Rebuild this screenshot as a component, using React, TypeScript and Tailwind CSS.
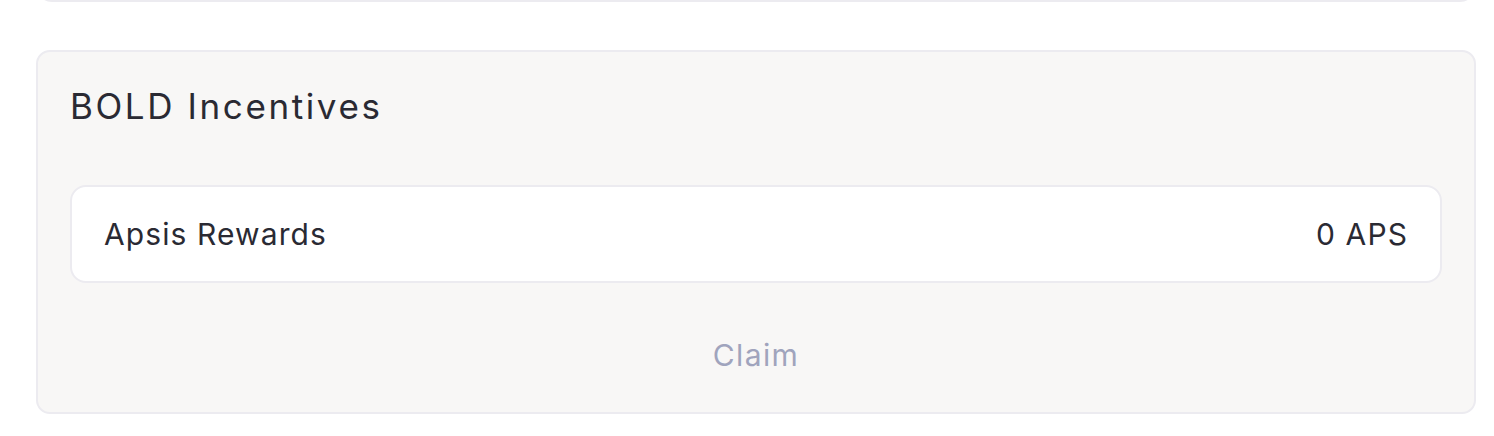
import React from "react";

export default function App() {
  return (
    <div
      className="h-[436px] w-full overflow-hidden bg-white pl-[36px] pr-[18px] text-[#2a2a33]"
      style={{ fontFamily: "Inter, 'Noto Sans', sans-serif" }}
    >
      <div className="-mt-[60px] h-[62px] rounded-[16px] border-2 border-[#ecebf0] bg-white" />
      <div className="mt-[48px] flex h-[364px] flex-col rounded-[14px] border-2 border-[#ecebf0] bg-[#f8f7f6] px-[32px]">
        <div className="pt-[32px] text-[35px] leading-[44px] font-normal tracking-[2.6px]">
          BOLD Incentives
        </div>
        <div className="mt-[57px] flex h-[98px] items-center justify-between rounded-[16px] border-2 border-[#ecebf0] bg-white px-[32px] text-[30px] tracking-[1.1px]">
          <span>Apsis Rewards</span>
          <span>0 APS</span>
        </div>
        <div className="flex flex-1 items-center justify-center pt-[16px] text-[30px] tracking-[1.4px] text-[#a0a4bd]">
          Claim
        </div>
      </div>
    </div>
  );
}
